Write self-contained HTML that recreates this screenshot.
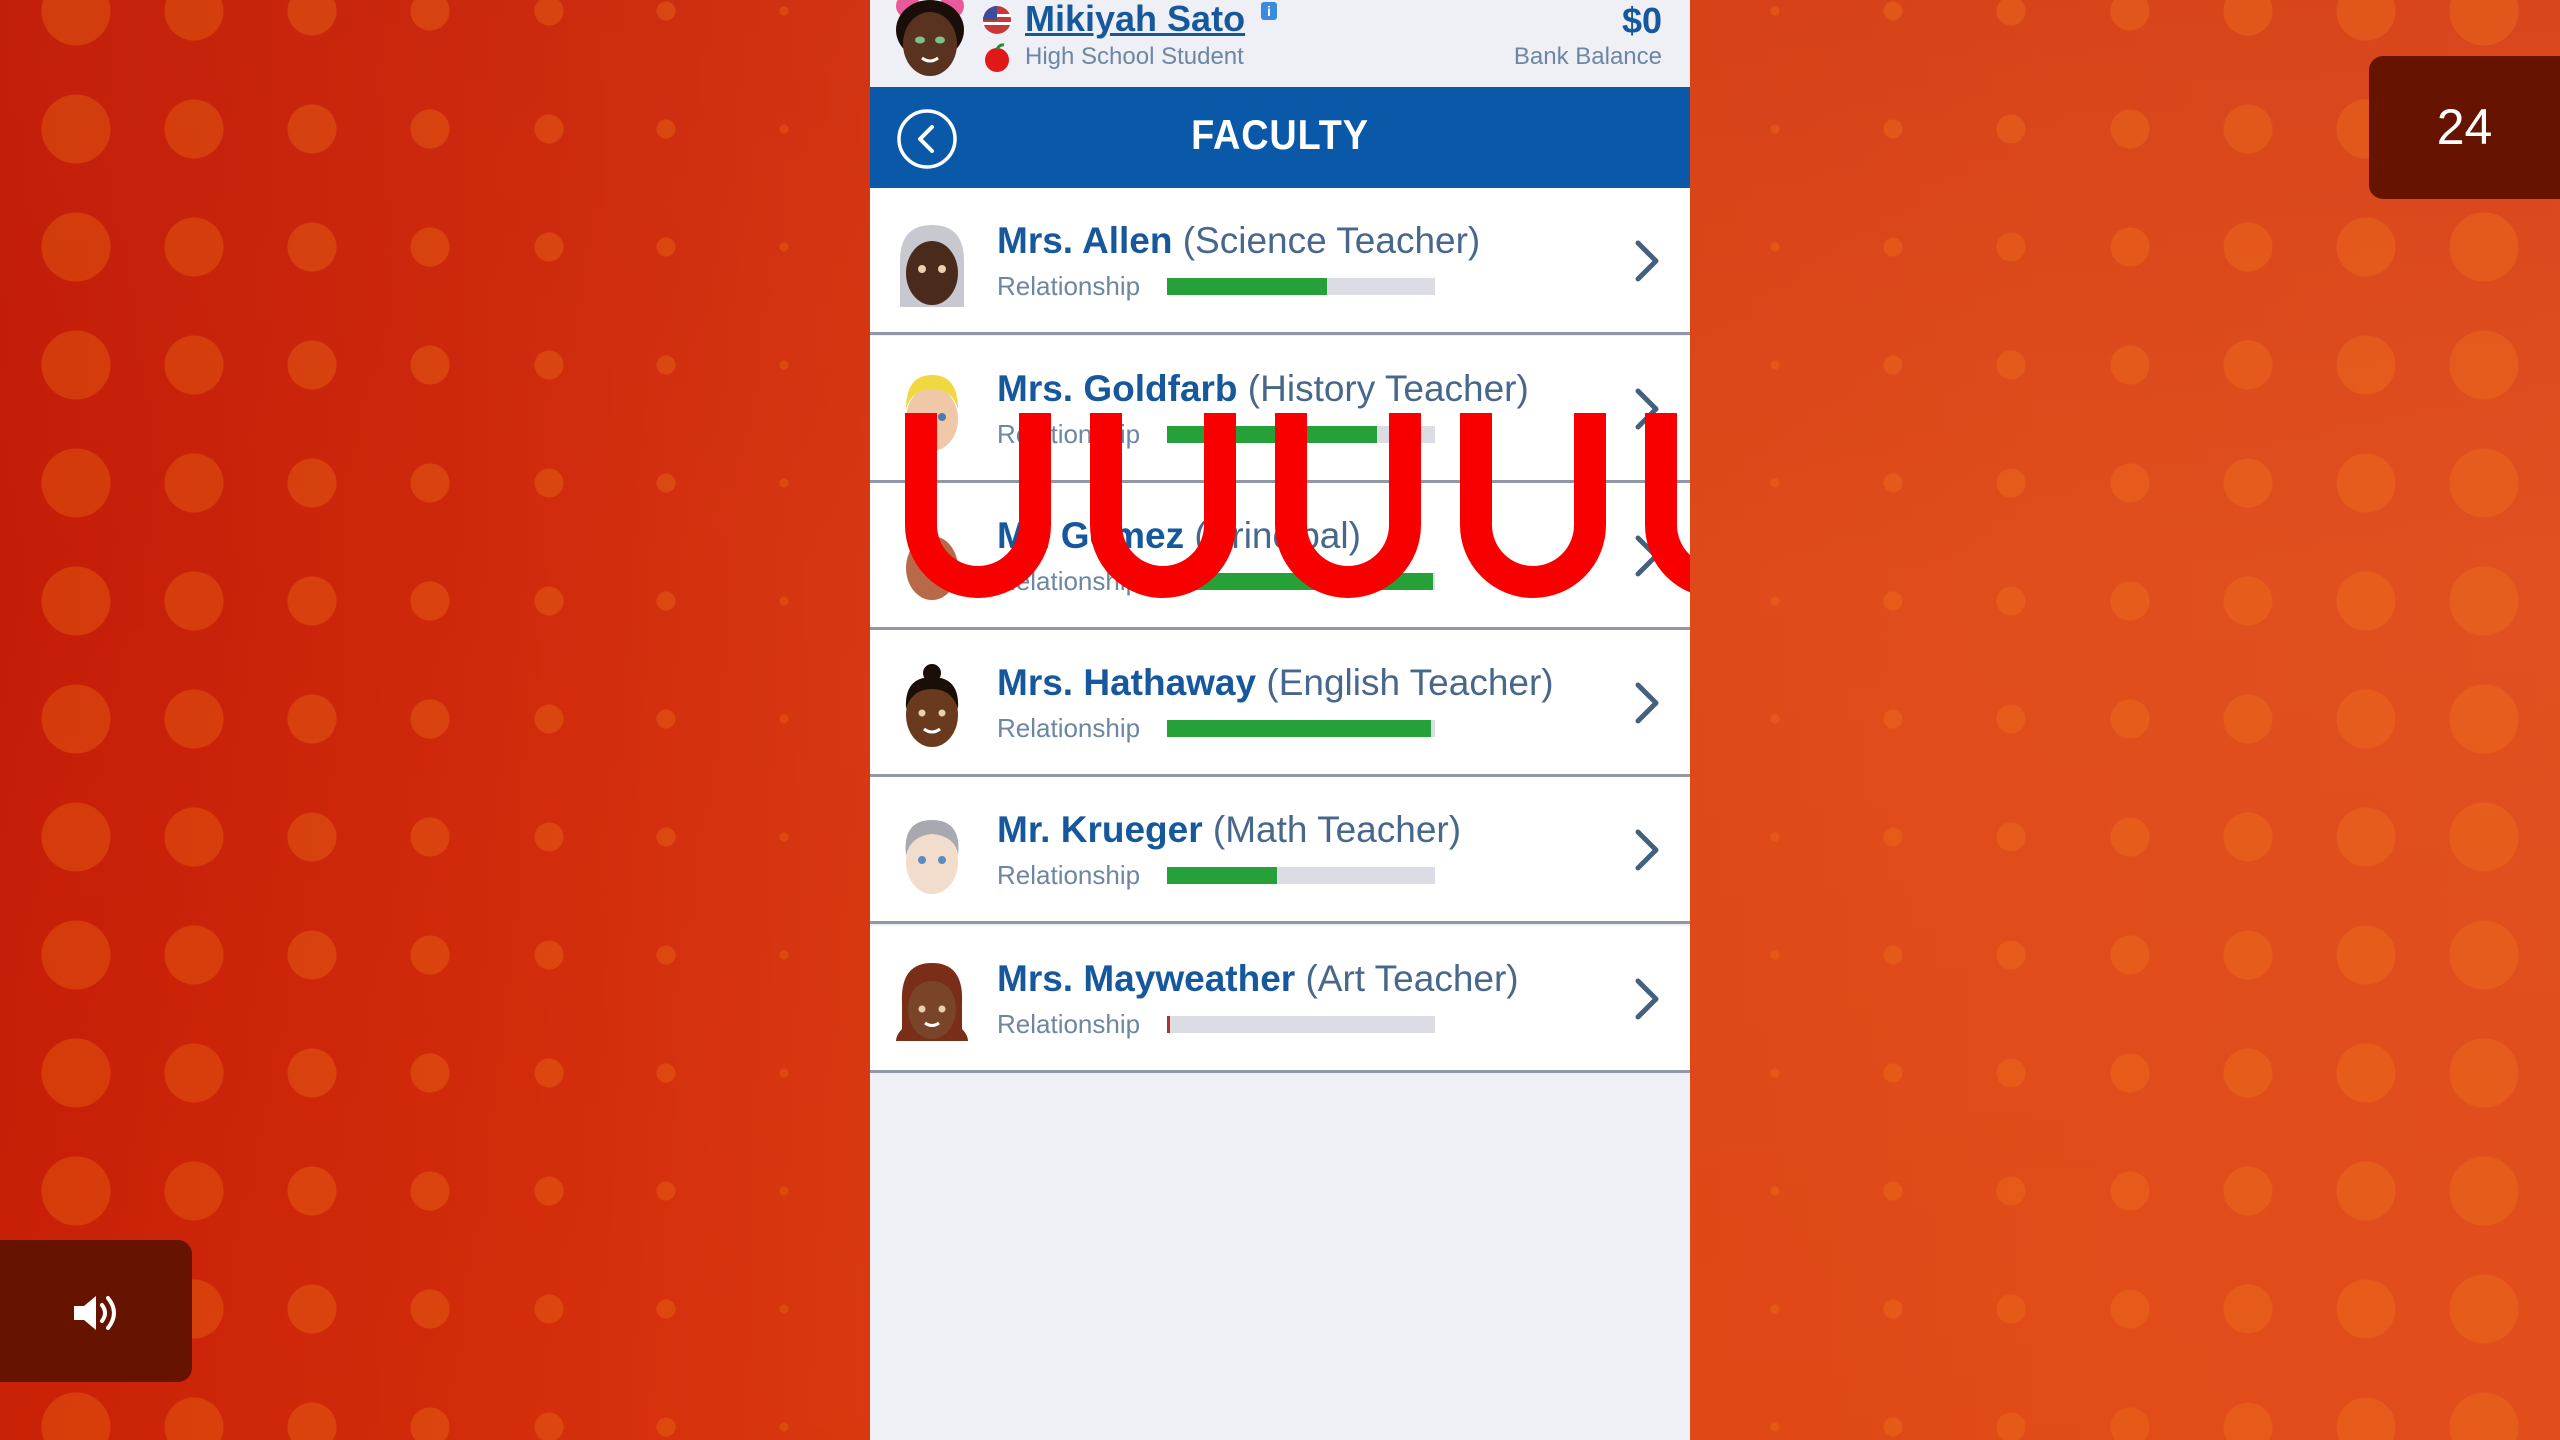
<!DOCTYPE html>
<html style="width:2560px;height:1440px;overflow:hidden"><head><meta charset="utf-8"><style>
*{margin:0;padding:0;box-sizing:border-box}
html,body{width:2560px;height:1440px;overflow:hidden}
body{position:relative;font-family:"Liberation Sans",sans-serif;
background:linear-gradient(90deg,#c41c08 0%,#d02a0c 20%,#da3e14 40%,#de4818 60%,#e04e1c 80%,#e05020 100%);}
.bgv{position:absolute;inset:0;background:linear-gradient(180deg,rgba(190,40,20,0.25),rgba(0,0,0,0) 40%,rgba(230,60,0,0.15))}
.col{position:absolute;top:-48px;width:118px;height:1488px;background-size:118px 118px;background-repeat:repeat-y}
.panel{position:absolute;left:870px;top:0;width:820px;height:1440px;background:#eef0f5;overflow:hidden}
.hdr{position:absolute;left:0;top:0;width:820px;height:87px;background:#eef0f6}
.bar{position:absolute;left:0;top:87px;width:820px;height:101px;background:#0a58a8}
.row{position:absolute;left:0;width:820px;height:147px;background:#fff;border-bottom:3px solid #8f98a4}
.nm{position:absolute;left:127px;top:32px;font-size:37px;white-space:nowrap;color:#48678c;line-height:42px}
.nm b{color:#17589c}
.rl{position:absolute;left:127px;top:83px;font-size:26px;color:#6d86a2;line-height:30px}
.trk{position:absolute;left:297px;top:90px;width:268px;height:17px;background:#dcdde4}
.fill{position:absolute;left:0;top:0;height:17px;background:#26a038}
.chev{position:absolute;left:762px;top:51px}
.av{position:absolute;left:22px;top:33px}
</style></head><body>
<div class="bgv"></div>
<div class="col" style="left:17px;background-image:radial-gradient(circle at 59px 59px,rgba(236,105,15,.38) 34px,transparent 35px)"></div>
<div class="col" style="left:135px;background-image:radial-gradient(circle at 59px 59px,rgba(236,105,15,.38) 29px,transparent 30px)"></div>
<div class="col" style="left:253px;background-image:radial-gradient(circle at 59px 59px,rgba(236,110,20,.38) 24px,transparent 25px)"></div>
<div class="col" style="left:371px;background-image:radial-gradient(circle at 59px 59px,rgba(236,110,20,.38) 19px,transparent 20px)"></div>
<div class="col" style="left:490px;background-image:radial-gradient(circle at 59px 59px,rgba(236,110,20,.38) 14px,transparent 15px)"></div>
<div class="col" style="left:607px;background-image:radial-gradient(circle at 59px 59px,rgba(236,110,20,.38) 9px,transparent 10px)"></div>
<div class="col" style="left:725px;background-image:radial-gradient(circle at 59px 59px,rgba(236,110,20,.35) 4px,transparent 5px)"></div>
<div class="col" style="left:2425px;background-image:radial-gradient(circle at 59px 59px,rgba(240,115,25,.38) 34px,transparent 35px)"></div>
<div class="col" style="left:2307px;background-image:radial-gradient(circle at 59px 59px,rgba(240,115,25,.38) 29px,transparent 30px)"></div>
<div class="col" style="left:2189px;background-image:radial-gradient(circle at 59px 59px,rgba(240,115,25,.38) 24px,transparent 25px)"></div>
<div class="col" style="left:2071px;background-image:radial-gradient(circle at 59px 59px,rgba(240,115,25,.38) 19px,transparent 20px)"></div>
<div class="col" style="left:1952px;background-image:radial-gradient(circle at 59px 59px,rgba(240,115,25,.38) 14px,transparent 15px)"></div>
<div class="col" style="left:1834px;background-image:radial-gradient(circle at 59px 59px,rgba(240,115,25,.38) 9px,transparent 10px)"></div>
<div class="col" style="left:1716px;background-image:radial-gradient(circle at 59px 59px,rgba(240,115,25,.35) 4px,transparent 5px)"></div>

<div class="panel">
 <div class="hdr">
  <svg style="position:absolute;left:20px;top:0" width="80" height="80" viewBox="0 0 80 80">
   <circle cx="18" cy="6" r="12" fill="#e85a9a"/><circle cx="62" cy="6" r="12" fill="#e85a9a"/>
   <ellipse cx="40" cy="30" rx="34" ry="30" fill="#1a0e08"/>
   <ellipse cx="40" cy="44" rx="27" ry="32" fill="#5a3220"/>
   <ellipse cx="30" cy="40" rx="5" ry="3.5" fill="#7cc08a"/><ellipse cx="50" cy="40" rx="5" ry="3.5" fill="#7cc08a"/>
   <path d="M32 58 Q40 64 48 58" stroke="#fff" stroke-width="3" fill="none"/>
  </svg>
  <svg style="position:absolute;left:112px;top:5px" width="30" height="30"><circle cx="15" cy="15" r="14" fill="#c83838"/><rect x="1" y="9" width="28" height="3" fill="#fff"/><rect x="1" y="17" width="28" height="3" fill="#fff"/><path d="M1 15 A14 14 0 0 1 15 1 V15Z" fill="#3a4e9a"/></svg>
  <svg style="position:absolute;left:112px;top:43px" width="30" height="30"><circle cx="15" cy="17" r="12" fill="#e01818"/><path d="M15 6 q3 -5 7 -4" stroke="#2a8a2a" stroke-width="3" fill="none"/></svg>
  <div style="position:absolute;left:155px;top:-2px;font-size:36px;font-weight:bold;color:#17589c;text-decoration:underline;white-space:nowrap">Mikiyah Sato</div>
  <div style="position:absolute;left:391px;top:2px;width:16px;height:18px;background:#3a8ae0;border-radius:3px;color:#fff;font-size:14px;font-weight:bold;text-align:center;line-height:18px">i</div>
  <div style="position:absolute;left:155px;top:43px;font-size:24px;color:#6d86a2;white-space:nowrap">High School Student</div>
  <div style="position:absolute;right:28px;top:0px;font-size:36px;font-weight:bold;color:#17589c">$0</div>
  <div style="position:absolute;right:28px;top:43px;font-size:24px;color:#6d86a2">Bank Balance</div>
 </div>
 <div class="bar">
  <svg style="position:absolute;left:25px;top:20px" width="64" height="64"><circle cx="32" cy="32" r="28" stroke="#fff" stroke-width="3.5" fill="none"/><path d="M37 20 L25 32 L37 44" stroke="#fff" stroke-width="4" fill="none" stroke-linecap="round" stroke-linejoin="round"/></svg>
  <div style="position:absolute;left:0;width:820px;top:24px;text-align:center;font-size:42px;font-weight:bold;color:#fff;letter-spacing:1px;transform:scaleX(0.9)">FACULTY</div>
 </div>

 <div class="row" style="top:188px">
  <svg class="av" width="80" height="90" viewBox="0 0 80 90"><path d="M8 40 Q8 4 40 4 Q72 4 72 40 L72 86 L8 86Z" fill="#c8c8d0"/><ellipse cx="40" cy="52" rx="26" ry="32" fill="#4a2a1a"/><path d="M14 30 Q40 10 66 30 L66 20 Q40 0 14 20Z" fill="#c8c8d0"/><circle cx="30" cy="48" r="4" fill="#e8d0b0"/><circle cx="50" cy="48" r="4" fill="#e8d0b0"/></svg>
  <div class="nm"><b>Mrs. Allen</b> (Science Teacher)</div>
  <div class="rl">Relationship</div><div class="trk"><div class="fill" style="width:160px"></div></div>
  <svg class="chev" width="30" height="44"><path d="M6 4 L24 22 L6 40" stroke="#44607f" stroke-width="5" fill="none" stroke-linecap="round" stroke-linejoin="round"/></svg>
 </div>
 <div class="row" style="top:336px">
  <svg class="av" width="80" height="90" viewBox="0 0 80 90"><ellipse cx="40" cy="50" rx="26" ry="32" fill="#f0c8a8"/><path d="M14 40 Q14 6 40 6 Q66 6 66 40 Q60 20 40 20 Q20 20 14 40Z" fill="#f0d840"/><circle cx="50" cy="48" r="4" fill="#4a7ab0"/></svg>
  <div class="nm"><b>Mrs. Goldfarb</b> (History Teacher)</div>
  <div class="rl">Relationship</div><div class="trk"><div class="fill" style="width:210px"></div></div>
  <svg class="chev" width="30" height="44"><path d="M6 4 L24 22 L6 40" stroke="#44607f" stroke-width="5" fill="none" stroke-linecap="round" stroke-linejoin="round"/></svg>
 </div>
 <div class="row" style="top:483px">
  <svg class="av" width="80" height="90" viewBox="0 0 80 90"><ellipse cx="40" cy="52" rx="26" ry="32" fill="#b86a48"/></svg>
  <div class="nm"><b>Mr. Gomez</b> (Principal)</div>
  <div class="rl">Relationship</div><div class="trk"><div class="fill" style="width:266px"></div></div>
  <svg class="chev" width="30" height="44"><path d="M6 4 L24 22 L6 40" stroke="#44607f" stroke-width="5" fill="none" stroke-linecap="round" stroke-linejoin="round"/></svg>
 </div>
 <div class="row" style="top:630px">
  <svg class="av" width="80" height="90" viewBox="0 0 80 90"><circle cx="40" cy="10" r="9" fill="#1a0e08"/><ellipse cx="40" cy="52" rx="26" ry="32" fill="#6a3a1e"/><path d="M14 46 Q12 14 40 14 Q68 14 66 46 Q60 26 40 26 Q20 26 14 46Z" fill="#1a0e08"/><circle cx="30" cy="50" r="3.5" fill="#e8d0b0"/><circle cx="50" cy="50" r="3.5" fill="#e8d0b0"/><path d="M32 66 Q40 72 48 66" stroke="#fff" stroke-width="3" fill="none"/></svg>
  <div class="nm"><b>Mrs. Hathaway</b> (English Teacher)</div>
  <div class="rl">Relationship</div><div class="trk"><div class="fill" style="width:264px"></div></div>
  <svg class="chev" width="30" height="44"><path d="M6 4 L24 22 L6 40" stroke="#44607f" stroke-width="5" fill="none" stroke-linecap="round" stroke-linejoin="round"/></svg>
 </div>
 <div class="row" style="top:777px">
  <svg class="av" width="80" height="90" viewBox="0 0 80 90"><ellipse cx="40" cy="52" rx="26" ry="32" fill="#f2dccc"/><path d="M14 46 Q10 10 40 10 Q70 10 66 46 Q64 26 40 24 Q18 26 14 46Z" fill="#a8a8b0"/><circle cx="30" cy="50" r="4" fill="#5a8ac0"/><circle cx="50" cy="50" r="4" fill="#5a8ac0"/></svg>
  <div class="nm"><b>Mr. Krueger</b> (Math Teacher)</div>
  <div class="rl">Relationship</div><div class="trk"><div class="fill" style="width:110px"></div></div>
  <svg class="chev" width="30" height="44"><path d="M6 4 L24 22 L6 40" stroke="#44607f" stroke-width="5" fill="none" stroke-linecap="round" stroke-linejoin="round"/></svg>
 </div>
 <div class="row" style="top:926px">
  <svg class="av" width="80" height="90" viewBox="0 0 80 90"><path d="M10 44 Q8 4 40 4 Q72 4 70 44 L70 70 Q76 76 76 82 L4 82 Q4 76 10 70Z" fill="#7a2e18"/><ellipse cx="40" cy="50" rx="24" ry="30" fill="#7a4428"/><path d="M16 40 Q20 14 40 14 Q60 14 64 40 Q56 22 40 22 Q24 22 16 40Z" fill="#7a2e18"/><circle cx="30" cy="50" r="3.5" fill="#e8d0b0"/><circle cx="50" cy="50" r="3.5" fill="#e8d0b0"/><path d="M33 64 Q40 69 47 64" stroke="#fff" stroke-width="3" fill="none"/></svg>
  <div class="nm"><b>Mrs. Mayweather</b> (Art Teacher)</div>
  <div class="rl">Relationship</div><div class="trk"><div class="fill" style="width:3px;background:#b03030"></div></div>
  <svg class="chev" width="30" height="44"><path d="M6 4 L24 22 L6 40" stroke="#44607f" stroke-width="5" fill="none" stroke-linecap="round" stroke-linejoin="round"/></svg>
 </div>

 <svg style="position:absolute;left:0;top:0" width="820" height="700">
  <g stroke="#f80000" stroke-width="32" fill="none">
   <path d="M51 413 V525 A57 57 0 0 0 165 525 V413"/>
   <path d="M236 413 V525 A57 57 0 0 0 350 525 V413"/>
   <path d="M421 413 V525 A57 57 0 0 0 535 525 V413"/>
   <path d="M606 413 V525 A57 57 0 0 0 720 525 V413"/>
   <path d="M791 413 V525 A57 57 0 0 0 905 525 V413"/>
  </g>
 </svg>
</div>

<div style="position:absolute;left:2369px;top:56px;width:191px;height:143px;background:#661400;border-radius:14px 0 0 14px;color:#fff;font-size:50px;text-align:center;line-height:143px">24</div>

<div style="position:absolute;left:0;top:1240px;width:192px;height:142px;background:#661400;border-radius:0 14px 14px 0"></div>
<svg style="position:absolute;left:70px;top:1290px" width="54" height="46" viewBox="0 0 54 46">
 <path d="M4 16 H14 L26 6 V40 L14 30 H4Z" fill="#fff"/>
 <path d="M32 15 Q38 23 32 31" stroke="#fff" stroke-width="4" fill="none" stroke-linecap="round"/>
 <path d="M38 8 Q50 23 38 38" stroke="#fff" stroke-width="4" fill="none" stroke-linecap="round"/>
</svg>
</body></html>
